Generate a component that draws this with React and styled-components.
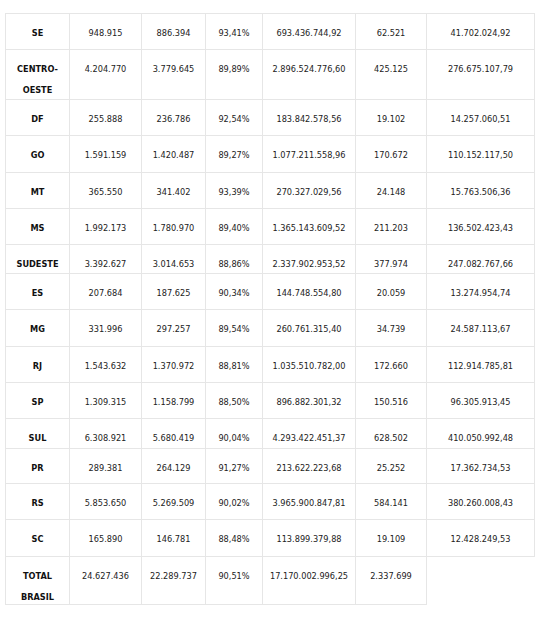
import React from 'react'
import styled, { createGlobalStyle } from 'styled-components'

const GlobalStyle = createGlobalStyle`
  body {
    margin: 0;
    background: #fff;
  }
`

const Page = styled.div`
  padding: 13px 0 0 5px;
  font-family: 'DejaVu Sans', Verdana, sans-serif;
  font-size: 8.2px;
  color: #222;
`

const widths = [64, 72, 64, 57, 93, 71, 108]

const Grid = styled.div`
  display: grid;
  grid-template-columns: ${widths.map((w) => `${w}px`).join(' ')};
  grid-template-rows: ${(p) => p.$rows.map((h) => `${h}px`).join(' ')};
  width: max-content;
  border-top: 1px solid #e6e6e6;
  border-left: 1px solid #e6e6e6;
`

const Cell = styled.div`
  box-sizing: border-box;
  border-right: 1px solid #e6e6e6;
  border-bottom: 1px solid #e6e6e6;
  padding: 9px 2px 0;
  line-height: 21px;
  text-align: center;
  white-space: nowrap;
  overflow: visible;
`

const Label = styled(Cell)`
  font-weight: bold;
  color: #111;
`

const rows = [
  { label: ['SE'], h: 36, v: ['948.915', '886.394', '93,41%', '693.436.744,92', '62.521', '41.702.024,92'] },
  { label: ['CENTRO-', 'OESTE'], h: 50, v: ['4.204.770', '3.779.645', '89,89%', '2.896.524.776,60', '425.125', '276.675.107,79'] },
  { label: ['DF'], h: 36, v: ['255.888', '236.786', '92,54%', '183.842.578,56', '19.102', '14.257.060,51'] },
  { label: ['GO'], h: 37, v: ['1.591.159', '1.420.487', '89,27%', '1.077.211.558,96', '170.672', '110.152.117,50'] },
  { label: ['MT'], h: 36, v: ['365.550', '341.402', '93,39%', '270.327.029,56', '24.148', '15.763.506,36'] },
  { label: ['MS'], h: 36, v: ['1.992.173', '1.780.970', '89,40%', '1.365.143.609,52', '211.203', '136.502.423,43'] },
  { label: ['SUDESTE'], h: 29, v: ['3.392.627', '3.014.653', '88,86%', '2.337.902.953,52', '377.974', '247.082.767,66'] },
  { label: ['ES'], h: 36, v: ['207.684', '187.625', '90,34%', '144.748.554,80', '20.059', '13.274.954,74'] },
  { label: ['MG'], h: 37, v: ['331.996', '297.257', '89,54%', '260.761.315,40', '34.739', '24.587.113,67'] },
  { label: ['RJ'], h: 36, v: ['1.543.632', '1.370.972', '88,81%', '1.035.510.782,00', '172.660', '112.914.785,81'] },
  { label: ['SP'], h: 36, v: ['1.309.315', '1.158.799', '88,50%', '896.882.301,32', '150.516', '96.305.913,45'] },
  { label: ['SUL'], h: 30, v: ['6.308.921', '5.680.419', '90,04%', '4.293.422.451,37', '628.502', '410.050.992,48'] },
  { label: ['PR'], h: 35, v: ['289.381', '264.129', '91,27%', '213.622.223,68', '25.252', '17.362.734,53'] },
  { label: ['RS'], h: 36, v: ['5.853.650', '5.269.509', '90,02%', '3.965.900.847,81', '584.141', '380.260.008,43'] },
  { label: ['SC'], h: 37, v: ['165.890', '146.781', '88,48%', '113.899.379,88', '19.109', '12.428.249,53'] },
  { label: ['TOTAL', 'BRASIL'], h: 48, v: ['24.627.436', '22.289.737', '90,51%', '17.170.002.996,25', '2.337.699'] },
]

const App = () => (
  <>
    <GlobalStyle />
    <Page>
      <Grid $rows={rows.map((r) => r.h)}>
        {rows.map((r, i) => (
          <React.Fragment key={i}>
            <Label>
              {r.label.map((l, j) => (
                <div key={j}>{l}</div>
              ))}
            </Label>
            {r.v.map((v, j) => (
              <Cell key={j}>{v}</Cell>
            ))}
          </React.Fragment>
        ))}
      </Grid>
    </Page>
  </>
)

export default App
